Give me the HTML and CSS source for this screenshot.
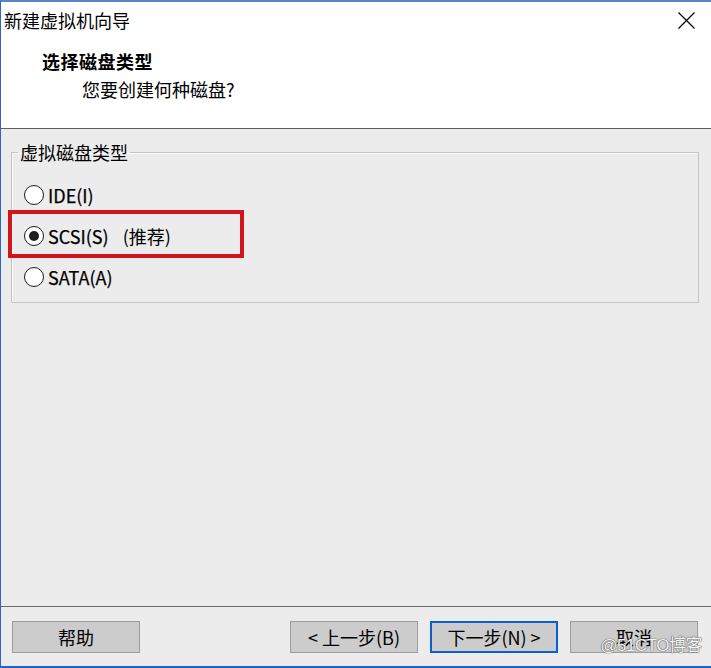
FILE: index.html
```html
<!DOCTYPE html>
<html lang="zh-CN">
<head>
<meta charset="utf-8">
<title>新建虚拟机向导</title>
<link rel="stylesheet" href="styles.css">
</head>
<body>
<div class="window">
  <header class="header">
    <div class="titlebar">
      <span class="title">新建虚拟机向导</span>
      <svg class="close" width="17" height="17" viewBox="0 0 17 17" aria-label="关闭">
        <path d="M0.5 0.5 L16.5 16.5 M16.5 0.5 L0.5 16.5" stroke="#000" stroke-width="1.2" fill="none"/>
      </svg>
    </div>
    <div class="heading">选择磁盘类型</div>
    <div class="subheading">您要创建何种磁盘?</div>
  </header>
  <main class="content">
    <fieldset class="group">
      <legend class="legend">虚拟磁盘类型</legend>
      <div class="row"><span class="radio"></span><span class="label">IDE(I)</span></div>
      <div class="row row-marked"><span class="radio checked"></span><span class="label">SCSI(S)</span><span class="hint">(推荐)</span><span class="mark"></span></div>
      <div class="row"><span class="radio"></span><span class="label">SATA(A)</span></div>
    </fieldset>
  </main>
  <footer class="footer">
    <button class="btn">帮助</button>
    <div class="nav">
      <button class="btn">&lt; 上一步(B)</button>
      <button class="btn btn-default">下一步(N) &gt;</button>
      <button class="btn">取消</button>
    </div>
    <span class="watermark">@51CTO博客</span>
  </footer>
</div>
</body>
</html>
```
FILE: styles.css
```css
* { box-sizing: border-box; }
html, body { margin: 0; padding: 0; }
body {
  width: 711px;
  height: 668px;
  overflow: hidden;
  font-family: "Noto Sans CJK SC", "Noto Sans", sans-serif;
  font-size: 18px;
  color: #000;
  background: #ececec;
}
.window {
  width: 711px;
  height: 668px;
  display: flex;
  flex-direction: column;
  border-top: 2px solid #5b83c9;
  border-left: 1px solid #2a66c9;
  border-bottom: 2px solid #1f63cf;
}
.header {
  background: #fff;
  height: 127px;
  flex: none;
  border-bottom: 1px solid #5f5f5f;
  padding: 6px 16px 0 3px;
}
.titlebar {
  display: flex;
  justify-content: space-between;
  align-items: center;
  height: 24px;
  line-height: 24px;
}
.title { font-size: 18px; }
.close { display: block; margin-top: 1px; }
.heading {
  margin-top: 17px;
  padding-left: 38px;
  line-height: 24px;
  font-weight: bold;
  letter-spacing: 0.5px;
}
.subheading {
  margin-top: 4px;
  padding-left: 78px;
  line-height: 24px;
}
.content {
  flex: 1;
  background: #ececec;
  padding: 12px 12px 0 10px;
}
.group {
  margin: 0;
  padding: 11px 0 5px 0;
  border: 1px solid #c4c4c4;
  box-shadow: inset 1px 1px 0 #fafafa;
  min-width: 0;
}
.legend {
  margin-left: 6px;
  padding: 0 2px;
  line-height: 22px;
  font-size: 18px;
}
.row {
  position: relative;
  display: flex;
  align-items: center;
  height: 41px;
  padding-left: 12px;
}
.radio {
  width: 20px;
  height: 20px;
  border: 1.5px solid #1a1a1a;
  border-radius: 50%;
  background: #fff;
  display: flex;
  align-items: center;
  justify-content: center;
  flex: none;
}
.radio.checked::after {
  content: "";
  width: 10px;
  height: 10px;
  border-radius: 50%;
  background: #1e1e1e;
}
.label {
  margin-left: 4px;
  font-size: 18px;
  -webkit-text-stroke: 0.25px #000;
}
.hint {
  margin-left: 14px;
  font-size: 18px;
}
.mark {
  position: absolute;
  left: -4px;
  top: -5px;
  width: 236px;
  height: 48px;
  border: 4px solid #d0151d;
}
.footer {
  position: relative;
  flex: none;
  height: 60px;
  border-top: 1px solid #6a6a6a;
  padding: 14px 13px 0 11px;
  display: flex;
  justify-content: space-between;
  align-items: flex-start;
}
.nav {
  display: flex;
  gap: 12px;
}
.btn {
  width: 128px;
  height: 32px;
  background: #cccccc;
  border: 1px solid #9d9d9d;
  font-family: "Noto Sans CJK SC", "Noto Sans", sans-serif;
  font-size: 18px;
  color: #000;
  padding: 0;
  line-height: 28px;
}
.btn-default {
  border: 2px solid #0a5fd0;
}
.watermark {
  position: absolute;
  right: 9px;
  top: 24px;
  font-family: "Liberation Sans", "Noto Sans CJK SC", sans-serif;
  font-size: 17px;
  letter-spacing: -0.5px;
  color: #f4f4f4;
  text-shadow: 0 0 1px #444, 0 0 1px #444;
}
```
